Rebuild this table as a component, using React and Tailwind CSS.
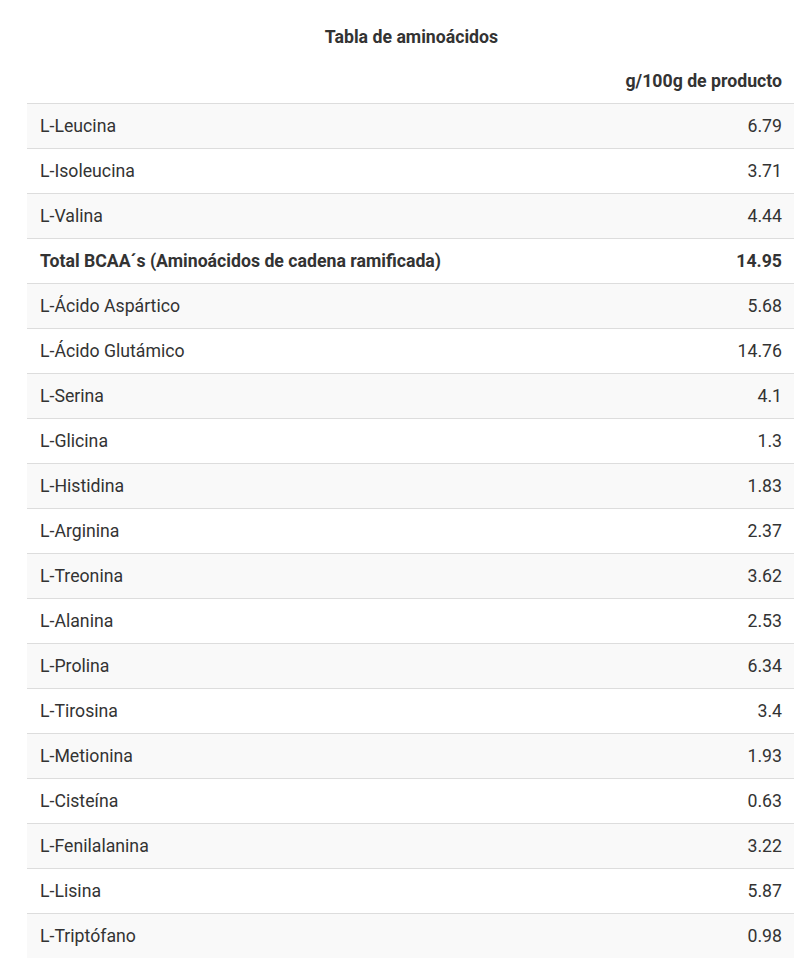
import React from "react";

const rows = [
  ["L-Leucina", "6.79"],
  ["L-Isoleucina", "3.71"],
  ["L-Valina", "4.44"],
  ["Total BCAA´s (Aminoácidos de cadena ramificada)", "14.95", true],
  ["L-Ácido Aspártico", "5.68"],
  ["L-Ácido Glutámico", "14.76"],
  ["L-Serina", "4.1"],
  ["L-Glicina", "1.3"],
  ["L-Histidina", "1.83"],
  ["L-Arginina", "2.37"],
  ["L-Treonina", "3.62"],
  ["L-Alanina", "2.53"],
  ["L-Prolina", "6.34"],
  ["L-Tirosina", "3.4"],
  ["L-Metionina", "1.93"],
  ["L-Cisteína", "0.63"],
  ["L-Fenilalanina", "3.22"],
  ["L-Lisina", "5.87"],
  ["L-Triptófano", "0.98"],
];

function App() {
  return (
    <div className="bg-white min-h-[977px] pl-[27px] pr-[14px] pt-[25px] text-[#333] font-['Roboto',sans-serif] text-[17.7px]">
      <h3 className="text-center font-bold text-[17.7px] leading-[24px] h-[33px] pl-[2px]">
        Tabla de aminoácidos
      </h3>
      <table className="w-full border-collapse">
        <thead>
          <tr className="h-[45px]">
            <th></th>
            <th className="text-right font-bold px-[12px] pt-[2px] align-middle">g/100g de producto</th>
          </tr>
        </thead>
        <tbody>
          {rows.map(([name, value, bold], i) => (
            <tr
              key={name}
              className={
                "h-[45px] border-t border-[#dddddd] " +
                (i % 2 === 0 ? "bg-[#f9f9f9]" : "bg-white")
              }
            >
              <td className={"px-[13px] pt-[2px] " + (bold ? "font-bold" : "")}>{name}</td>
              <td className={"px-[12px] pt-[2px] text-right " + (bold ? "font-bold" : "")}>{value}</td>
            </tr>
          ))}
        </tbody>
      </table>
    </div>
  );
}

export default App;
